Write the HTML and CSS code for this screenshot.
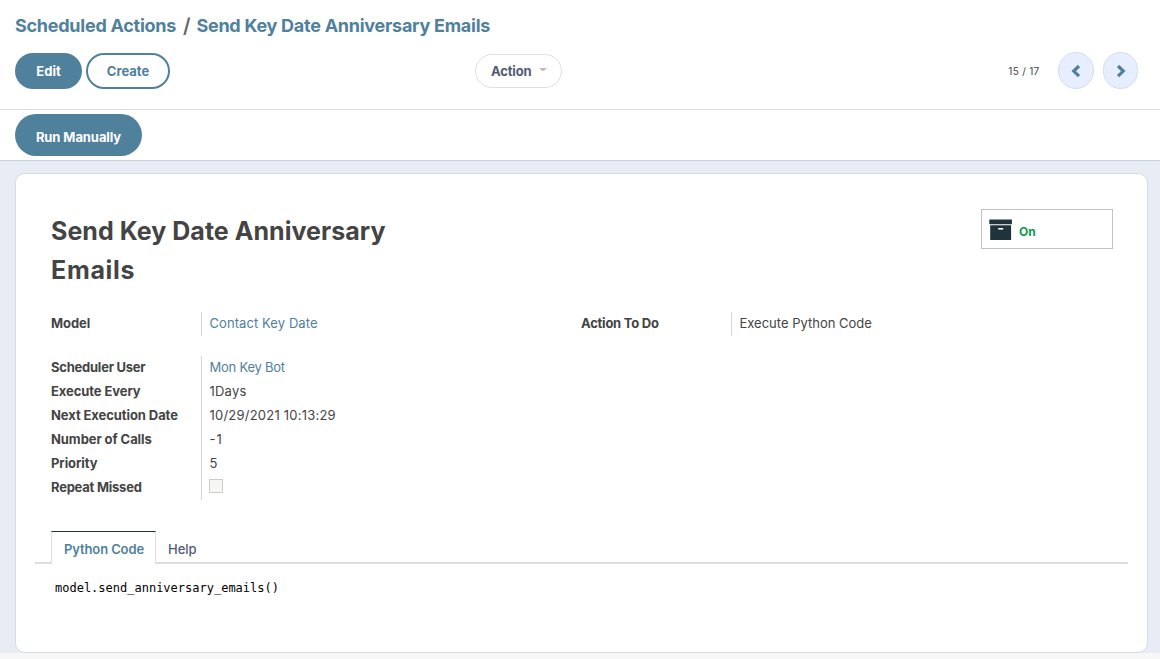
FILE: index.html
```
<!DOCTYPE html>
<html lang="en">
<head>
<meta charset="utf-8">
<title>Send Key Date Anniversary Emails</title>
<link rel="stylesheet" href="styles.css">
</head>
<body>
<header class="control-panel">
  <nav class="breadcrumb"><a class="crumb-root">Scheduled Actions</a><span class="slash">/</span><a class="crumb-current">Send Key Date Anniversary Emails</a></nav>
  <div class="toolbar">
    <div class="buttons">
      <button class="btn btn-primary">Edit</button>
      <button class="btn btn-outline">Create</button>
    </div>
    <button class="action-menu"><span class="action-label">Action</span><svg class="caret" width="8" height="4" viewBox="0 0 8 4"><path d="M0 0h8L4.8 3H3.2z"/></svg></button>
    <div class="pager">
      <span class="pager-count">15 / 17</span>
      <button class="pager-btn"><svg width="12" height="14" viewBox="0 0 12 14"><path d="M9 2 3.7 7.1 9 12.2"/></svg></button>
      <button class="pager-btn"><svg width="12" height="14" viewBox="0 0 12 14"><path d="M3 2l5.3 5.1L3 12.2"/></svg></button>
    </div>
  </div>
</header>
<div class="statusbar"><button class="btn btn-run">Run Manually</button></div>
<main class="content">
  <section class="sheet">
    <div class="sheet-head">
      <h1 class="title"><span class="title-first">Send Key Date Anniversary</span><br><span class="title-second">Emails</span></h1>
      <button class="stat"><svg width="24" height="22" viewBox="0 0 24 22"><path class="box" d="M.3.5h22.6v4.8H.3zM1.2 6.3h20.9V21H1.2z"/><path class="handle" d="M9.2 9h5v1.6h-5z"/></svg><span class="stat-label">On</span></button>
    </div>
    <div class="groups">
      <dl class="group"><dt>Model</dt><dd class="link looser">Contact Key Date</dd></dl>
      <dl class="group"><dt class="tight">Action To Do</dt><dd>Execute Python Code</dd></dl>
    </div>
    <dl class="group group-main">
      <dt class="tight">Scheduler User</dt><dd class="link tight">Mon Key Bot</dd>
      <dt>Execute Every</dt><dd class="loose">1Days</dd>
      <dt>Next Execution Date</dt><dd class="loose">10/29/2021 10:13:29</dd>
      <dt>Number of Calls</dt><dd class="minus">-1</dd>
      <dt>Priority</dt><dd>5</dd>
      <dt class="tight">Repeat Missed</dt><dd><i class="checkbox"></i></dd>
    </dl>
    <div class="tabs"><a class="tab active">Python Code</a><a class="tab">Help</a></div>
    <pre class="code">model.send_anniversary_emails()</pre>
  </section>
</main>
</body>
</html>
```
FILE: styles.css
```
* { box-sizing: border-box; }
body {
  margin: 0;
  height: 659px;
  overflow: hidden;
  background: #f7f7f7;
  color: #444;
  font: 13px/24px Inter, "Liberation Sans", sans-serif;
}
button { font: inherit; padding: 0; cursor: pointer; }
a { color: #50819c; }
.control-panel { height: 110px; background: #fff; border-bottom: 1px solid #d7dbde; }
.breadcrumb {
  display: flex;
  height: 52px;
  padding: 0 15px;
  align-items: center;
  font-size: 18px;
  font-weight: 700;
  letter-spacing: -.26px;
  white-space: nowrap;
}
.slash { margin: 0 6px 0 7px; color: #666; font-size: 20px; font-weight: 600; }
.toolbar {
  display: grid;
  grid-template-columns: 460px 87px 1fr;
  align-items: center;
  height: 37px;
  padding: 0 22px 0 15px;
}
.buttons { display: flex; gap: 4px; }
.btn { display: block; border: 0; font-weight: 700; white-space: nowrap; }
.btn-primary { width: 67px; height: 36px; border-radius: 18px; background: #50819c; color: #fff; }
.btn-outline { width: 84px; height: 36px; border: 2px solid #50819c; border-radius: 18px; background: #fff; color: #50819c; }
.action-menu {
  display: flex;
  align-items: center;
  width: 87px;
  height: 34px;
  padding-left: 15px;
  gap: 7px;
  border: 1px solid #d8dfe5;
  border-radius: 17px;
  background: #fff;
  color: #515c74;
  font-weight: 700;
}
.action-label { letter-spacing: -.15px; }
.caret { fill: #b5bfc8; margin-top: -2px; }
.pager { display: flex; align-items: center; justify-content: flex-end; }
.pager-count { margin-right: 18.5px; font-size: 10px; letter-spacing: .3px; }
.pager-btn {
  display: flex;
  align-items: center;
  justify-content: center;
  width: 36px;
  height: 37px;
  border: 1px solid #d8dde4;
  border-radius: 18px;
  background: #e7eeff;
}
.pager-btn + .pager-btn { margin-left: 9px; width: 35px; }
.pager-btn path { fill: none; stroke: #50819c; stroke-width: 3.2; }
.statusbar { height: 51px; padding: 4px 15px; background: #fff; border-bottom: 1px solid #c8d0d9; }
.btn-run { width: 127px; height: 42px; padding-top: 4px; border-radius: 21px; background: #50819c; color: #fff; letter-spacing: -.08px; }
.content { height: 492px; padding: 12px 12px 0 15px; background: #e8edf5; }
.sheet { height: 480px; padding: 35px 19px 0; border: 1px solid #d7dbe0; border-radius: 10px; background: #fff; }
.sheet-head { display: flex; justify-content: space-between; height: 103px; padding: 0 15px 0 16px; }
.title { margin: 3px 0 0; font-size: 25px; line-height: 39px; font-weight: 700; white-space: nowrap; }
.title-first { letter-spacing: .04px; }
.title-second { letter-spacing: .7px; }
.stat {
  display: flex;
  align-items: center;
  width: 132px;
  height: 40px;
  padding: 2px 0 0 7px;
  gap: 6px;
  border: 1px solid #c2c2c2;
  background: #fff;
  color: #099d49;
  font-weight: 700;
  font-size: 12px;
}
.stat-label { padding-top: 4px; }
.box { fill: #20323b; }
.handle { fill: #fff; }
.groups { display: grid; grid-template-columns: 530px 1fr; padding-left: 16px; }
.group { display: grid; grid-template-columns: 150px 1fr; grid-auto-rows: 24px; margin: 0; line-height: 22px; white-space: nowrap; }
.group-main { margin: 20px 0 0 16px; }
.group dt { font-weight: 700; letter-spacing: -.08px; }
.group dd { margin: 0; padding-left: 7.5px; border-left: 1px solid #d5d5d5; }
.group .link { color: #50819c; }
.group .tight { letter-spacing: -.24px; }
.group .loose { letter-spacing: .22px; }
.group .looser { letter-spacing: .08px; }
.group .minus { letter-spacing: 1px; }
.checkbox { display: block; width: 14px; height: 14px; margin: 3px 0 0 -.5px; border: 1px solid #ccc; background: #f7f7f5; }
.tabs { display: flex; height: 33px; margin-top: 31px; padding-left: 16px; border-bottom: 2px solid #dbdfe3; }
.tab { height: 33px; padding: 6px 12px 0; color: #515c74; font-weight: 500; white-space: nowrap; }
.tab.active { width: 105px; padding-top: 5px; border: 1px solid #dbdfe3; border-top-color: #20323b; border-bottom: 0; background: #fff; color: #50819c; font-weight: 600; letter-spacing: -.12px; }
.code { margin: 12px 0 0 20px; color: #000; font: 12px/24px "DejaVu Sans Mono", monospace; }
```
